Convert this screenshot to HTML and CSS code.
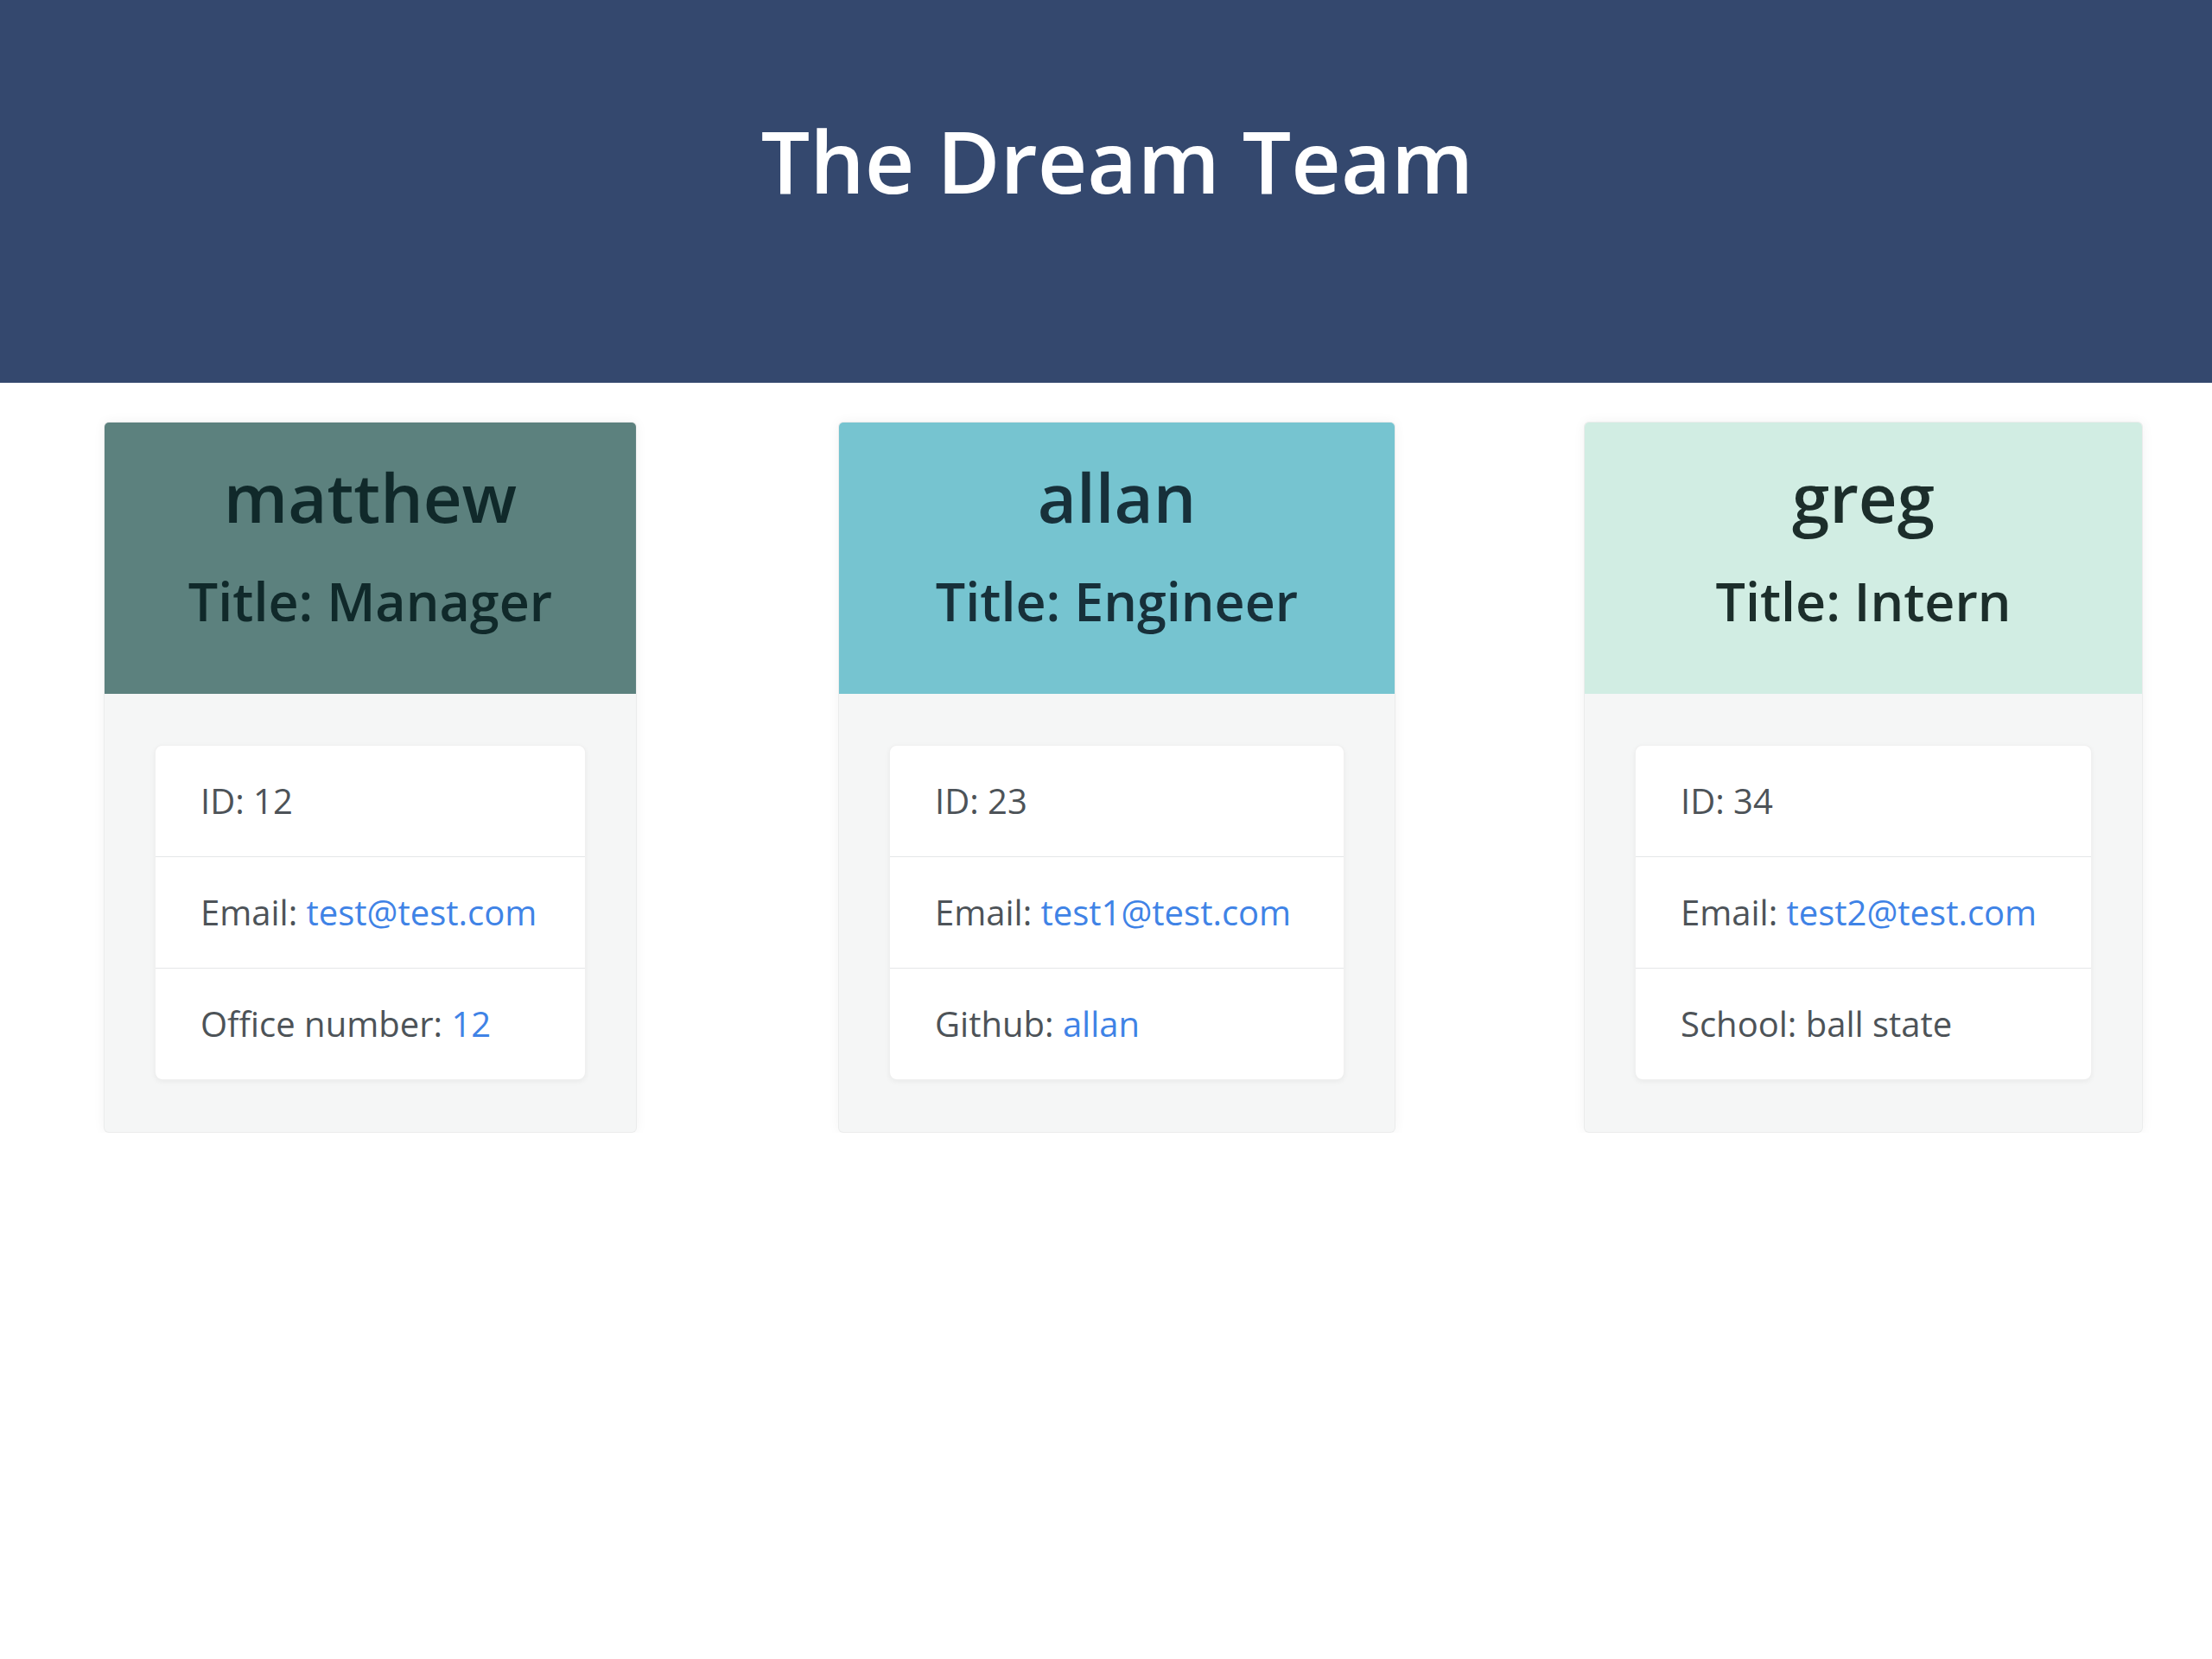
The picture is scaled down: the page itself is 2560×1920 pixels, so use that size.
FILE: index.html
```html
<!DOCTYPE html>
<html lang="en">
<head>
<meta charset="utf-8">
<title>The Dream Team</title>
<link rel="stylesheet" href="styles.css">
</head>
<body>
<header class="jumbo">
  <h1 class="jumbo-title">The Dream Team</h1>
</header>
<main class="team">
  <section class="card card-manager">
    <div class="card-head head-manager">
      <h2 class="name">matthew</h2>
      <h4 class="role">Title: Manager</h4>
    </div>
    <div class="card-body">
      <ul class="list">
        <li class="item">ID: 12</li>
        <li class="item">Email: <a class="link" href="#">test@test.com</a></li>
        <li class="item">Office number: <a class="link" href="#">12</a></li>
      </ul>
    </div>
  </section>
  <section class="card card-engineer">
    <div class="card-head head-engineer">
      <h2 class="name">allan</h2>
      <h4 class="role">Title: Engineer</h4>
    </div>
    <div class="card-body">
      <ul class="list">
        <li class="item">ID: 23</li>
        <li class="item">Email: <a class="link" href="#">test1@test.com</a></li>
        <li class="item">Github: <a class="link" href="#">allan</a></li>
      </ul>
    </div>
  </section>
  <section class="card card-intern">
    <div class="card-head head-intern">
      <h2 class="name">greg</h2>
      <h4 class="role">Title: Intern</h4>
    </div>
    <div class="card-body">
      <ul class="list">
        <li class="item">ID: 34</li>
        <li class="item">Email: <a class="link" href="#">test2@test.com</a></li>
        <li class="item">School: ball state</li>
      </ul>
    </div>
  </section>
</main>
</body>
</html>
```

FILE: styles.css
```css
* { box-sizing: border-box; }

body {
  margin: 0;
  background: #ffffff;
  font-family: "Open Sans", "Noto Sans", "Liberation Sans", sans-serif;
  color: #495057;
}

.jumbo {
  height: 443px;
  background: #34486e;
  padding: 125px 0 0 26px;
  text-align: center;
}

.jumbo-title {
  margin: 0;
  font-size: 100px;
  line-height: 1.2;
  font-weight: 600;
  color: #ffffff;
}

.team {
  display: flex;
  align-items: flex-start;
  padding: 45px 0 0 120px;
}

.card {
  background: #f5f6f6;
  border: 1px solid rgba(0, 0, 0, 0.04);
  border-radius: 6px;
  box-shadow: 0 0 14px rgba(0, 0, 0, 0.05);
  overflow: hidden;
}

.card-manager { width: 617px; }
.card-engineer { width: 645px; margin-left: 233px; }
.card-intern { width: 647px; margin-left: 218px; }

.card-head {
  height: 314px;
  padding-top: 40px;
  text-align: center;
  color: #1d2b2f;
}

.head-manager { background: #5c817e; color: #10292a; }
.head-engineer { background: #76c4d0; color: #17303a; }
.head-intern { background: #d1ede3; color: #1c2e2b; }

.name {
  margin: 0 0 36px;
  font-size: 78px;
  line-height: 1.2;
  font-weight: 600;
}

.role {
  margin: 0;
  font-size: 61px;
  line-height: 1.2;
  font-weight: 600;
}

.card-body {
  padding: 59px 58px 60px;
}

.list {
  list-style: none;
  margin: 0;
  padding: 0;
  background: #ffffff;
  border: 1px solid rgba(0, 0, 0, 0.06);
  border-radius: 9px;
  box-shadow: 0 2px 6px rgba(0, 0, 0, 0.05);
}

.item {
  padding: 34px 52px;
  font-size: 40px;
  line-height: 60px;
  color: #4d5358;
  border-top: 1px solid #e4e6e8;
}

.item:first-child { border-top: none; }

.link {
  color: #3f83e6;
  text-decoration: none;
}
```
